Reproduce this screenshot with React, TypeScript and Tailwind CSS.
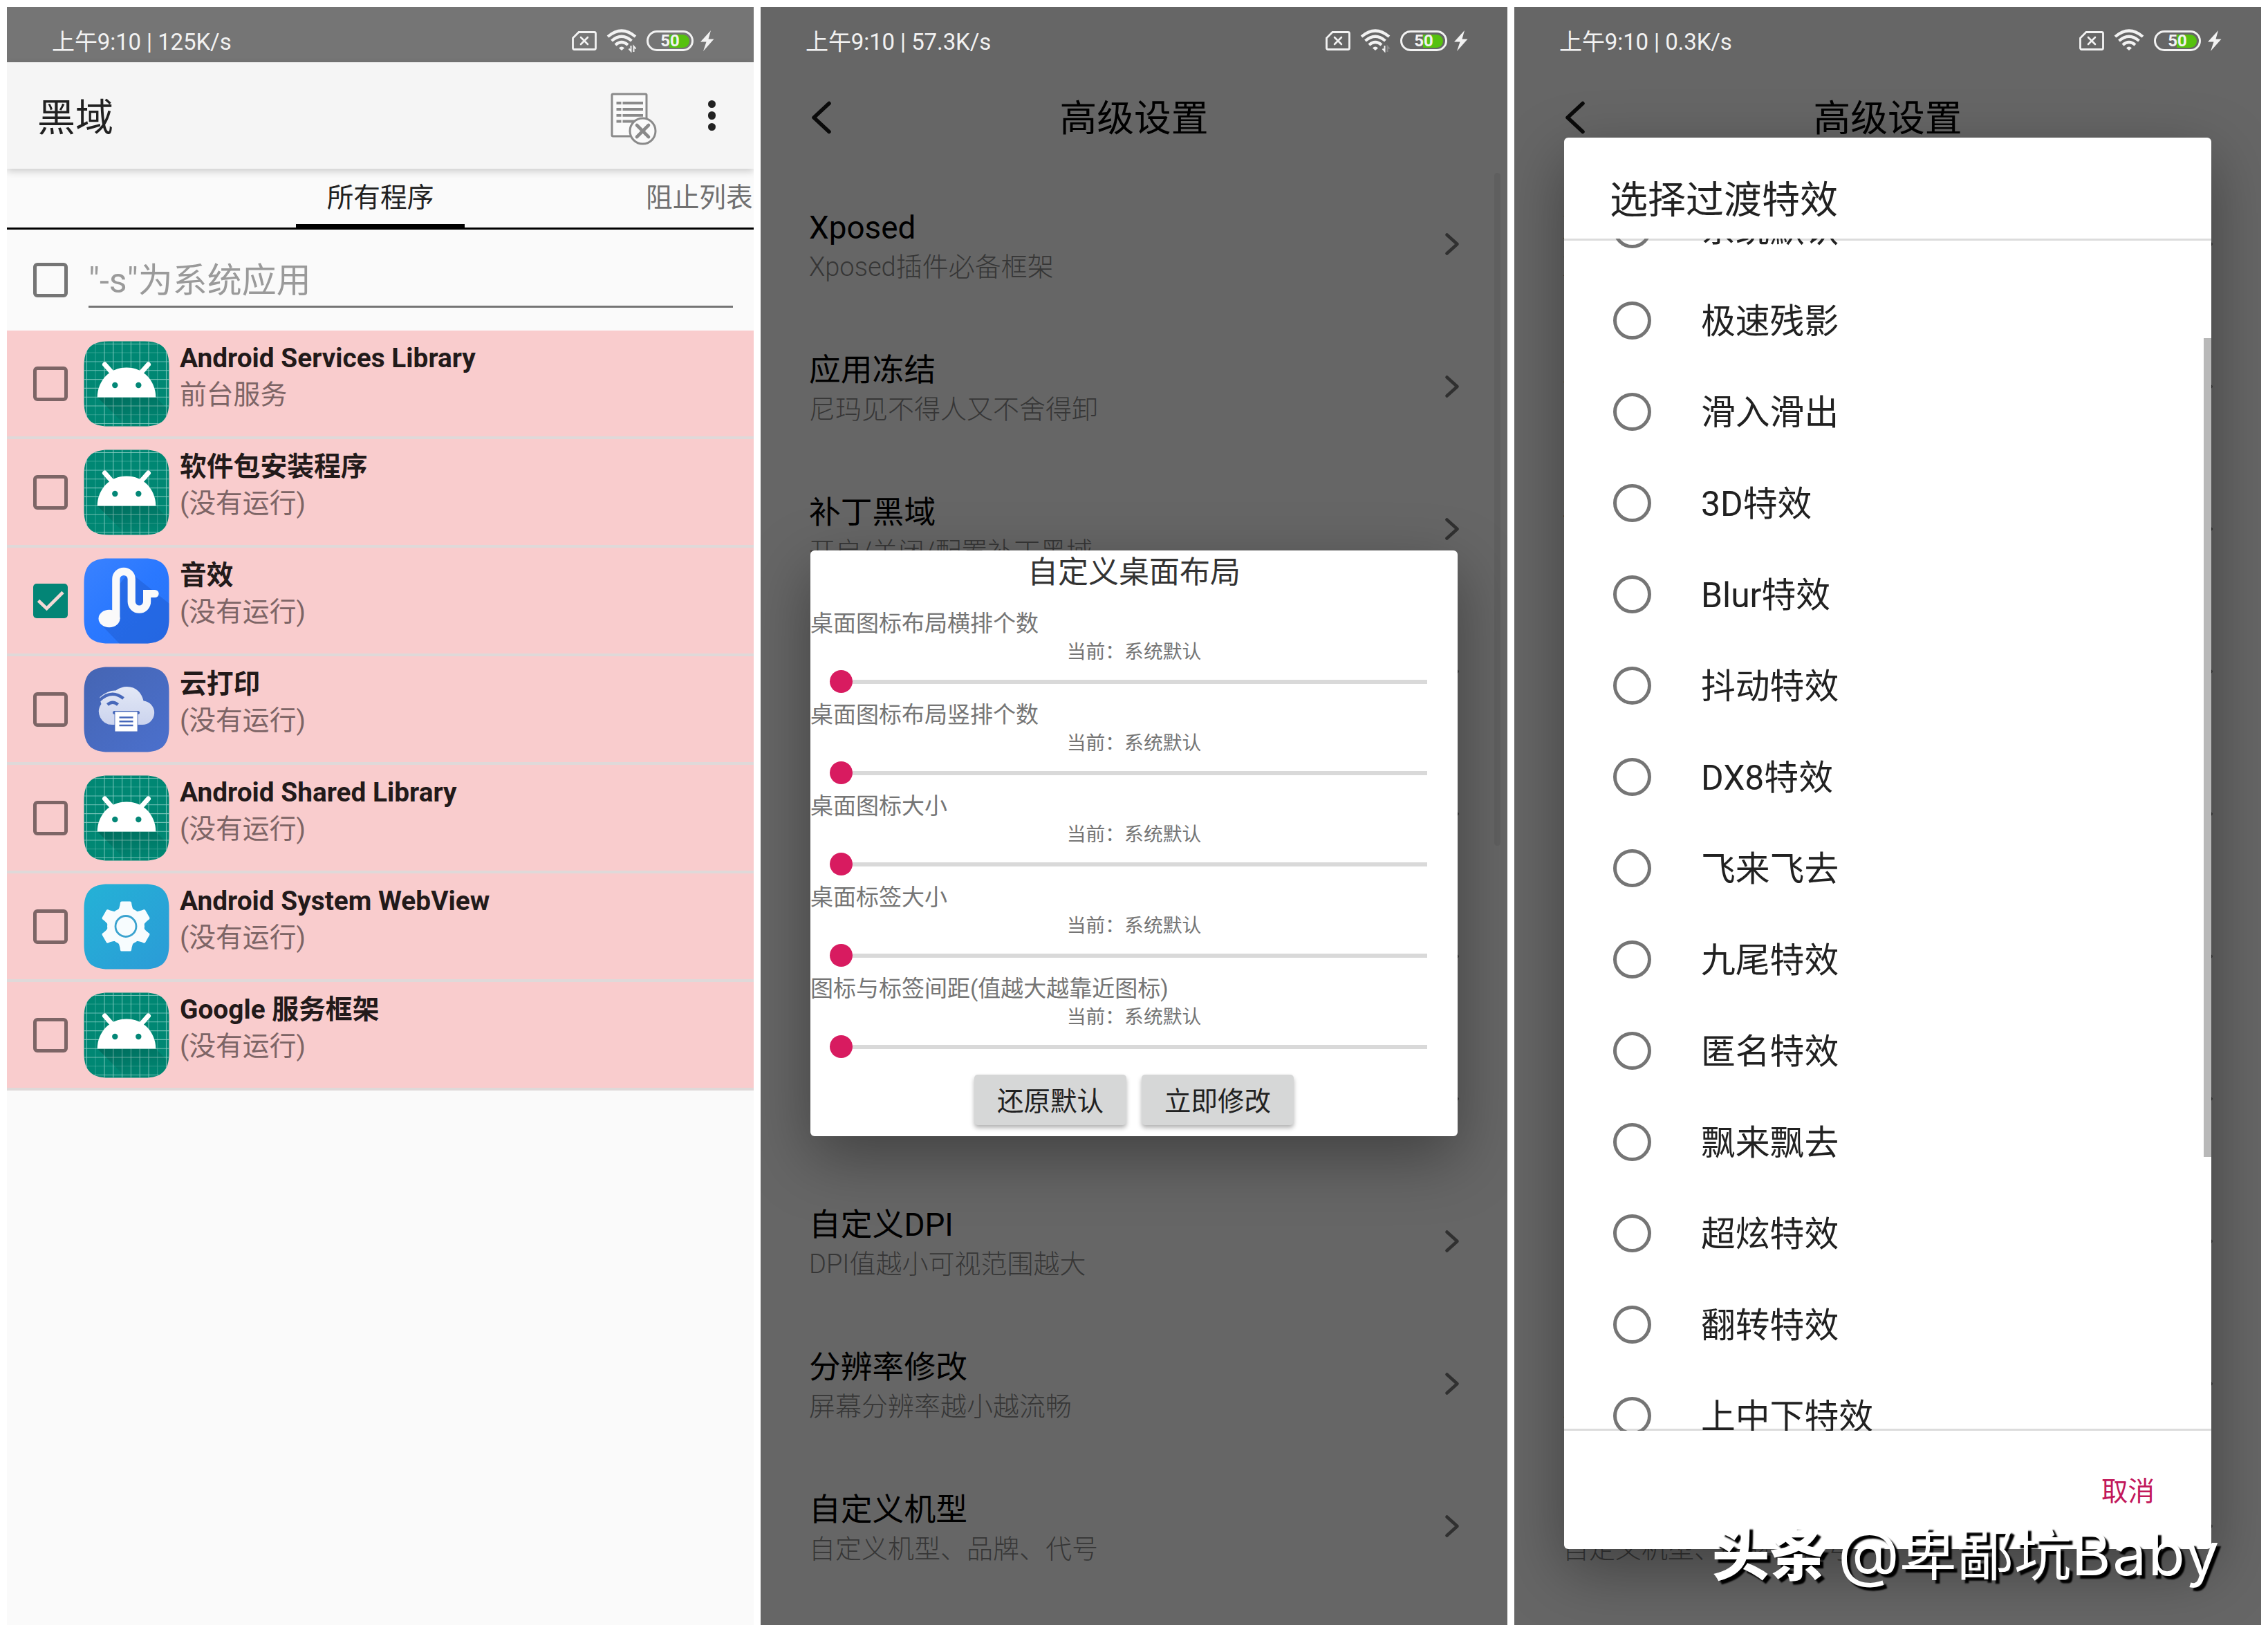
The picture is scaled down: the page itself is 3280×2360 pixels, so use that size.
import { Fragment } from 'react';
import type { ReactNode } from 'react';
import clsx from 'clsx';

type IconKind = 'android' | 'music' | 'print' | 'gear';

const apps: { name: string; status: string; icon: IconKind; checked?: boolean }[] = [
  { name: 'Android Services Library', status: '前台服务', icon: 'android' },
  { name: '软件包安装程序', status: '(没有运行)', icon: 'android' },
  { name: '音效', status: '(没有运行)', icon: 'music', checked: true },
  { name: '云打印', status: '(没有运行)', icon: 'print' },
  { name: 'Android Shared Library', status: '(没有运行)', icon: 'android' },
  { name: 'Android System WebView', status: '(没有运行)', icon: 'gear' },
  { name: 'Google 服务框架', status: '(没有运行)', icon: 'android' },
];

// Rows without a title sit behind the dialogs
const settings = [
  { title: 'Xposed', desc: 'Xposed插件必备框架' },
  { title: '应用冻结', desc: '尼玛见不得人又不舍得卸' },
  { title: '补丁黑域', desc: '开启/关闭/配置补丁黑域' },
  { title: '', desc: '' },
  { title: '', desc: '' },
  { title: '', desc: '' },
  { title: '', desc: '' },
  { title: '自定义DPI', desc: 'DPI值越小可视范围越大' },
  { title: '分辨率修改', desc: '屏幕分辨率越小越流畅' },
  { title: '自定义机型', desc: '自定义机型、品牌、代号' },
];

const sliders = [
  '桌面图标布局横排个数',
  '桌面图标布局竖排个数',
  '桌面图标大小',
  '桌面标签大小',
  '图标与标签间距(值越大越靠近图标)',
];

const effects = [
  '系统默认',
  '极速残影',
  '滑入滑出',
  '3D特效',
  'Blur特效',
  '抖动特效',
  'DX8特效',
  '飞来飞去',
  '九尾特效',
  '匿名特效',
  '飘来飘去',
  '超炫特效',
  '翻转特效',
  '上中下特效',
];

type Traffic = 'both' | 'down' | 'none';

function StatusBar({ speed, traffic, className }: { speed: string; traffic: Traffic; className?: string }) {
  return (
    <div className={clsx('flex h-20 shrink-0 items-center justify-between pt-[18px] pl-[65px] pr-[57px] text-[#f2f2f2]', className)}>
      <span className="pt-[3px] text-[33px] leading-[40px] tracking-[-0.1px] whitespace-pre">上午9:10 | {speed}</span>
      <div className="flex items-center">
        <svg width="36" height="28" viewBox="0 0 36 28" fill="none" stroke="#f2f2f2">
          <path d="M10 1.500H32.500a2 2 0 0 1 2 2V24.500a2 2 0 0 1-2 2H3.500a2 2 0 0 1-2-2V10z" strokeWidth="2.8" />
          <path d="M13 9l10 10M23 9L13 19" strokeWidth="2.6" strokeLinecap="round" />
        </svg>
        <svg className="ml-[14px]" width="44" height="34" viewBox="0 0 44 34" fill="none" stroke="#f2f2f2">
          <path d="M2 11Q22 -6 42 11" strokeWidth="4.2" />
          <path d="M7.500 17Q22 4.500 36.500 17" strokeWidth="4.2" />
          <path d="M13 23Q22 15 31 23" strokeWidth="4.2" />
          <path d="M18 27.500Q22 23.500 26 27.500L22 31z" fill="#f2f2f2" stroke="none" />
          {traffic !== 'none' && <path d="M32.500 28.500L35.500 32V24" strokeWidth="2" />}
          {traffic !== 'none' && (
            <path d="M42.500 28.500L39.500 25V33" strokeWidth="2" stroke={traffic === 'both' ? '#f2f2f2' : '#8a8a8a'} />
          )}
        </svg>
        <div className="relative ml-[14px] flex h-[30px] w-[68px] items-center justify-end rounded-full border-3 border-[#f2f2f2] pr-[3px]">
          <div className="h-[19px] w-[29px] rounded-r-full bg-[#56c10f]" />
          <span className="absolute inset-0 flex items-center justify-center text-[24px] leading-none font-bold">50</span>
        </div>
        <svg className="ml-[10px]" width="20" height="30" viewBox="0 0 20 30" fill="#f2f2f2">
          <path d="M15 0L0 16.500H8.500L4 30L19.500 12.500H11.500z" />
        </svg>
      </div>
    </div>
  );
}

function AppIcon({ kind }: { kind: IconKind }) {
  const grid = [4.5, 17, 30, 42.8, 55.6, 68.4, 81.2, 94, 106.7, 119.5];
  return (
    <svg width="124" height="124" viewBox="0 0 124 124">
      <defs>
        <linearGradient id="gMusic" x1="0" y1="0" x2="1" y2="1">
          <stop offset="0" stopColor="#3a82ff" />
          <stop offset="0.5" stopColor="#2a78ff" />
          <stop offset="1" stopColor="#2873f5" />
        </linearGradient>
        <linearGradient id="gPrint" x1="0" y1="0" x2="1" y2="1">
          <stop offset="0" stopColor="#4565b3" />
          <stop offset="1" stopColor="#4b70cd" />
        </linearGradient>
        <linearGradient id="gCloud" x1="0" y1="0" x2="0" y2="1">
          <stop offset="0" stopColor="#e3e8f6" />
          <stop offset="1" stopColor="#cbd4ee" />
        </linearGradient>
        <linearGradient id="gGear" x1="0" y1="0" x2="1" y2="1">
          <stop offset="0" stopColor="#24b2d6" />
          <stop offset="1" stopColor="#2b9bd7" />
        </linearGradient>
        <linearGradient id="gShade" x1="0" y1="0" x2="0.6" y2="1">
          <stop offset="0" stopColor="#000" stopOpacity="0.2" />
          <stop offset="1" stopColor="#000" stopOpacity="0" />
        </linearGradient>
        <clipPath id="tile">
          <path d="M36 .5H88C113 .5 123.500 11 123.500 36V88C123.500 113 113 123.500 88 123.500H36C11 123.500 .5 113 .5 88V36C.5 11 11 .5 36 .5z" />
        </clipPath>
      </defs>
      <g clipPath="url(#tile)">
        {kind === 'android' && (
          <>
            <rect width="124" height="124" fill="#048777" />
            {grid.map((p, i) => (
              <path
                key={p}
                d={`M${p} 0V124M0 ${p}H124`}
                stroke="#8fd0c6"
                strokeWidth="1.1"
                opacity={i === 1 || i === 8 ? 0.35 : 0.8}
              />
            ))}
            <path d="M20 81.500H104L124 101V124H62z" fill="url(#gShade)" />
            <path d="M30.500 34L42 47M93.500 34L82 47" stroke="#fff" strokeWidth="7" strokeLinecap="round" />
            <path d="M19.700 81.500C20 57 38 38.500 62 38.500S104 57 104.300 81.500z" fill="#fff" />
            <circle cx="45.3" cy="64" r="4.2" fill="#048777" />
            <circle cx="79.3" cy="64" r="4.2" fill="#048777" />
          </>
        )}
        {kind === 'music' && (
          <>
            <rect width="124" height="124" fill="url(#gMusic)" />
            <path d="M66 20L124 66V124H52L26 97L50 82V40z" fill="#1f55c4" opacity="0.4" />
            <ellipse cx="37" cy="87.5" rx="15.5" ry="12.8" fill="#fafafa" />
            <path
              d="M46.800 88V30.500a11.200 11.200 0 0 1 22.400 0V63a11.200 11.200 0 0 0 22.400 0V51.500H103"
              fill="none"
              stroke="#fafafa"
              strokeWidth="11.2"
            />
            <circle cx="103" cy="51.5" r="5.6" fill="#fafafa" />
          </>
        )}
        {kind === 'print' && (
          <>
            <rect width="124" height="124" fill="url(#gPrint)" />
            <path
              d="M41 84A19 19 0 0 1 25.500 54Q23 48 23.500 44Q35 34 46.500 34.500Q54 29 62.500 29C76 29 84 38 86.500 49.500A17.300 17.300 0 0 1 84 84z"
              fill="url(#gCloud)"
            />
            <path d="M22 49.500Q40 32 57.500 46" fill="none" stroke="#4768ba" strokeWidth="4.5" />
            <path d="M34.500 55Q42 48.500 49.500 55" fill="none" stroke="#4768ba" strokeWidth="4.5" />
            <rect x="42" y="64" width="39" height="5" rx="2.5" fill="#4768ba" />
            <rect x="45" y="65" width="33" height="29" fill="#fff" stroke="#4768ba" strokeWidth="0.8" />
            <path d="M51.500 73.500H71.500M51.500 79.300H71.500M51.500 85H71.500" stroke="#4768ba" strokeWidth="2.4" />
          </>
        )}
        {kind === 'gear' && (
          <>
            <rect width="124" height="124" fill="url(#gGear)" />
            <g fill="#f7fcfe">
              <circle cx="61" cy="61.5" r="27" />
              {[0, 60, 120, 180, 240, 300].map((a) => (
                <path
                  key={a}
                  transform={`rotate(${a} 61 61.5)`}
                  d="M48.500 40Q52 36 53 27Q53.300 25.500 55 25.500H67Q68.700 25.500 69 27Q70 36 73.500 40z"
                />
              ))}
            </g>
            <circle cx="61" cy="61.5" r="15" fill="none" stroke="#3aa3cf" strokeWidth="2.8" />
          </>
        )}
      </g>
    </svg>
  );
}

function Checkbox({ checked, className }: { checked?: boolean; className?: string }) {
  if (checked) {
    return (
      <div className="h-[50px] w-[50px] shrink-0 rounded-[5px] bg-[#038576]">
        <svg width="50" height="50" viewBox="0 0 50 50" fill="none" stroke="#f3d9d6" strokeWidth="4.8">
          <path d="M7.500 24.500L19.500 36L43 12.500" />
        </svg>
      </div>
    );
  }
  return <div className={clsx('h-[50px] w-[50px] shrink-0 rounded-[6px] border-[5.5px]', className)} />;
}

function AppListScreen() {
  return (
    <section className="flex h-[2340px] w-[1080px] flex-col overflow-hidden bg-[#fafafa]">
      <StatusBar speed="125K/s" traffic="both" className="bg-[#757575]" />

      {/* Toolbar */}
      <header className="z-10 flex h-[154px] shrink-0 items-center justify-between bg-[#f5f5f5] pr-[55px] pl-11 shadow-[0_4px_10px_rgba(0,0,0,0.18)]">
        <h1 className="pt-[5px] text-[55px] leading-[64px] text-[#212121]">黑域</h1>
        <div className="flex items-center gap-[73px]">
          <svg className="mt-[9px]" width="68" height="76" viewBox="0 0 68 76" fill="none" stroke="#8a8a8a">
            <rect x="2" y="2" width="50" height="61" rx="1.5" strokeWidth="3" fill="#fafafa" />
            <path d="M8.500 15H15.500M8.500 24H15.500M8.500 32.800H15.500M8.500 41.500H15.500" strokeWidth="3.8" />
            <path d="M17.500 15H47M17.500 24H47M17.500 32.800H47M17.500 41.500H40" strokeWidth="3.8" />
            <circle cx="46.5" cy="55.5" r="18.5" strokeWidth="3" fill="#fafafa" />
            <path d="M38 47L55 64M55 47L38 64" strokeWidth="4.6" strokeLinecap="round" />
          </svg>
          <div className="flex flex-col gap-[5px]">
            <i className="h-[11.5px] w-[11.5px] rounded-full bg-[#212121]" />
            <i className="h-[11.5px] w-[11.5px] rounded-full bg-[#212121]" />
            <i className="h-[11.5px] w-[11.5px] rounded-full bg-[#212121]" />
          </div>
        </div>
      </header>

      {/* Tabs */}
      <nav className="flex h-[88px] shrink-0 items-stretch border-b-3 border-black text-[38.7px] leading-[84px]">
        <div className="w-[418px]" />
        <div className="-mb-[3px] w-[244px] border-b-8 border-black text-center text-[#212121]">所有程序</div>
        <div className="ml-[262px] shrink-0 whitespace-nowrap text-[#707070]">阻止列表</div>
      </nav>

      {/* Filter */}
      <div className="flex h-[146px] shrink-0 items-center pr-[30px] pl-[38px]">
        <Checkbox className="border-[#757575]" />
        <div className="ml-[30px] flex h-[80px] flex-1 items-center border-b-3 border-[#757575] pt-[5px] text-[50px] text-[#9a9a9a]">
          "-s"为系统应用
        </div>
      </div>

      {/* Apps */}
      <ul>
        {apps.map((app) => (
          <li key={app.name} className="flex h-[157px] items-start border-b-4 border-[#dfd9d9] bg-[#f9cccd] pl-[38px]">
            <div className="flex h-[154px] items-center">
              <Checkbox checked={app.checked} className="border-[#7d6566]" />
            </div>
            <div className="mt-[15px] ml-[23px]">
              <AppIcon kind={app.icon} />
            </div>
            <div className="mt-[14px] ml-[15px]">
              <p className="text-[38.8px] leading-[52px] font-bold text-[#221a1a]">{app.name}</p>
              <p className="mt-px text-[38.8px] leading-[52px] text-[#7d6566]">{app.status}</p>
            </div>
          </li>
        ))}
      </ul>
    </section>
  );
}

function SettingsScreen({
  speed,
  traffic,
  scrollbar,
  children,
}: {
  speed: string;
  traffic: Traffic;
  scrollbar?: boolean;
  children: ReactNode;
}) {
  return (
    <section className="relative flex h-[2340px] w-[1080px] flex-col overflow-hidden bg-[#666666]">
      <StatusBar speed={speed} traffic={traffic} />
      <header className="grid h-[160px] shrink-0 grid-cols-[1fr_auto_1fr] items-center px-[72px]">
        <svg width="32" height="50" viewBox="0 0 32 50" fill="none" stroke="#0a0a0a" strokeWidth="5.5" strokeLinecap="round" strokeLinejoin="round">
          <path d="M27 4.500L5 25L27 45.500" />
        </svg>
        <h1 className="pt-[4px] text-[53.8px] leading-[64px] text-black">高级设置</h1>
      </header>
      <ul>
        {settings.map((s, i) => (
          <li key={i} className="flex h-[206px] items-center justify-between pr-[69px] pl-[70px]">
            <div className="pt-[6px]">
              <p className="h-[60px] text-[45.8px] leading-[60px] text-black">{s.title}</p>
              <p className="h-[52px] text-[38px] leading-[52px] font-light text-[#363636]">{s.desc}</p>
            </div>
            <svg width="22" height="34" viewBox="0 0 22 34" fill="none" stroke="#303030" strokeWidth="4.6" strokeLinecap="round" strokeLinejoin="round">
              <path d="M3.500 3.500L18.500 17L3.500 30.500" />
            </svg>
          </li>
        ))}
      </ul>
      {scrollbar && <div className="absolute top-[240px] right-[10px] h-[973px] w-[9px] rounded-full bg-[#5f5f5f]" />}
      {children}
    </section>
  );
}

function LayoutDialog() {
  return (
    <div className="absolute inset-0 px-[72px] pt-[786px]">
      <div className="h-[847px] rounded-[6px] bg-white shadow-[0_30px_90px_rgba(0,0,0,0.36)]">
        <h2 className="text-center text-[44px] leading-[64px] text-[#333]">自定义桌面布局</h2>
        <div className="mt-[20px] text-[#757575]">
          {sliders.map((label) => (
            <Fragment key={label}>
              <p className="text-[33px] leading-[44px]">{label}</p>
              <p className="text-center text-[27.8px] leading-[38px]">当前：系统默认</p>
              <div className="-mt-[3px] flex h-[53px] items-center pr-11 pl-[28px]">
                <i className="h-[33px] w-[33px] rounded-full bg-[#d81b60]" />
                <i className="h-[6px] flex-1 bg-[#d9d9d9]" />
              </div>
            </Fragment>
          ))}
        </div>
        <div className="mt-[14px] flex justify-center gap-[22px] text-[38.5px] leading-[76px] text-[#212121]">
          <button className="h-[73px] w-[220px] rounded-[5px] bg-[#d6d7d7] pt-px shadow-[0_4px_6px_rgba(0,0,0,0.3)]">还原默认</button>
          <button className="h-[73px] w-[220px] rounded-[5px] bg-[#d6d7d7] pt-px shadow-[0_4px_6px_rgba(0,0,0,0.3)]">立即修改</button>
        </div>
      </div>
    </div>
  );
}

function EffectDialog() {
  return (
    <div className="absolute inset-0 px-[72px] pt-[189px]">
      <div className="flex h-[2041px] flex-col rounded-[6px] bg-white shadow-[0_30px_90px_rgba(0,0,0,0.36)]">
        <h2 className="h-[146px] shrink-0 pt-[55px] pl-[66px] text-[55px] leading-[70px] text-[#212121]">选择过渡特效</h2>
        <div className="relative h-[1724px] shrink-0 overflow-hidden shadow-[inset_0_3px_#dcdcdc,inset_0_-3px_#dcdcdc]">
          <ul className="-mt-[80px]">
            {effects.map((effect) => (
              <li key={effect} className="flex h-[132px] items-center pl-[71px] text-[49.8px] text-[#212121]">
                <i className="h-[55px] w-[55px] rounded-full border-[5.5px] border-[#757575]" />
                <span className="pt-[4px] pl-[72px] leading-[60px]">{effect}</span>
              </li>
            ))}
          </ul>
          <div className="absolute top-[144px] right-0 h-[1184px] w-[11px] bg-[#b8b8b8]" />
        </div>
        <div className="flex flex-1 justify-end pt-[60px] pr-[82px] text-[38.5px] leading-[56px] text-[#c2185b]">取消</div>
      </div>
    </div>
  );
}

export default function App() {
  return (
    <main className="relative flex h-[2360px] w-[3280px] gap-[10px] overflow-hidden bg-white p-[10px] font-[Roboto,'Noto_Sans_CJK_SC',sans-serif]">
      <AppListScreen />
      <SettingsScreen speed="57.3K/s" traffic="down" scrollbar>
        <LayoutDialog />
      </SettingsScreen>
      <SettingsScreen speed="0.3K/s" traffic="none">
        <EffectDialog />
      </SettingsScreen>

      {/* Watermark */}
      <div className="absolute right-[68px] bottom-[52px] flex items-baseline font-[Inter,'Noto_Sans_CJK_SC',sans-serif] text-[83px] leading-[120px] whitespace-nowrap text-white [text-shadow:5px_5px_2px_#000]">
        <span className="mr-[16px] font-black">头条</span>
        <span className="text-[92px]">@</span>
        <span>卑鄙坑</span>
        <span className="text-[87px] tracking-[2.5px]">Baby</span>
      </div>
    </main>
  );
}
